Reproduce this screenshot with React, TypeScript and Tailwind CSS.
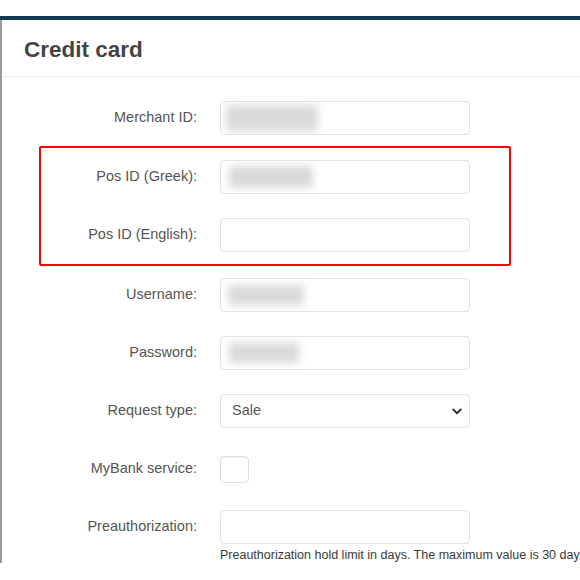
import type { ReactNode } from 'react'

const FONT = { fontFamily: '"Liberation Sans", Arial, sans-serif' }

function Blur({ w, h = 24, offset = 6 }: { w: number; h?: number; offset?: number }) {
  return (
    <div className="h-full flex items-center" style={{ paddingLeft: offset }}>
      <div className="bg-[#d9d9d9] blur-[4px] rounded-sm" style={{ width: w, height: h }} />
    </div>
  )
}

function Row({ label, labelW = 197, children }: { label: string; labelW?: number; children: ReactNode }) {
  return (
    <div className="flex items-center h-[58px]">
      <div className="text-right text-[14.5px] text-[#555] shrink-0" style={{ width: labelW }}>
        {label}
      </div>
      <div className="ml-[23px]">{children}</div>
    </div>
  )
}

function Input({ children }: { children?: ReactNode }) {
  return (
    <div className="w-[250px] h-[34px] border border-[#dde3ea] rounded-[4px] bg-white overflow-hidden">
      {children}
    </div>
  )
}

export default function App() {
  return (
    <div className="w-[580px] h-[580px] bg-white overflow-hidden" style={FONT}>
      <div className="h-4 bg-white" />
      <div className="h-1 bg-[#0e3a52]" />
      <div className="h-[543px] border-l-2 border-[#9a9a9a] bg-white overflow-hidden">
        <div className="h-[57px] border-b border-[#ececec] flex items-center pl-[22px] pt-[3px]">
          <h2 className="text-[22.5px] font-bold text-[#444]">Credit card</h2>
        </div>

        <div className="pt-[12px]">
          <Row label="Merchant ID:" labelW={195}>
            <Input>
              <Blur w={92} h={26} offset={5} />
            </Input>
          </Row>

          {/* highlighted group */}
          <div className="ml-[37px] w-[472px] -mt-[1px] border-2 border-[#f00] rounded-[2px]">
            <Row label="Pos ID (Greek):" labelW={156}>
              <Input>
                <Blur w={84} h={22} offset={8} />
              </Input>
            </Row>
            <Row label="Pos ID (English):" labelW={156}>
              <Input />
            </Row>
          </div>

          <Row label="Username:" labelW={195}>
            <Input>
              <Blur w={76} h={20} offset={7} />
            </Input>
          </Row>
          <Row label="Password:" labelW={195}>
            <Input>
              <Blur w={70} h={20} offset={8} />
            </Input>
          </Row>
          <Row label="Request type:" labelW={195}>
            <div className="w-[250px] h-[34px] border border-[#dde3ea] rounded-[4px] bg-white flex items-center justify-between pl-[11px] pr-[6px] text-[14.5px] text-[#555]">
              <span>Sale</span>
              <svg width="12" height="12" viewBox="0 0 16 16" fill="none" stroke="#333" strokeWidth="2.6" strokeLinecap="round" strokeLinejoin="round">
                <path d="M3 6l5 5 5-5" />
              </svg>
            </div>
          </Row>
          <Row label="MyBank service:" labelW={195}>
            <div className="w-[29px] h-[27px] border border-[#dedede] rounded-[4px] bg-white shadow-[inset_0_1px_2px_rgba(0,0,0,0.06)]" />
          </Row>
          <Row label="Preauthorization:" labelW={195}>
            <Input />
          </Row>
          <div className="pl-[218px] -mt-[9px] text-[12.5px] leading-[16px] text-[#3a3a3a] whitespace-nowrap">
            Preauthorization hold limit in days. The maximum value is 30 days
          </div>
        </div>
      </div>
    </div>
  )
}
